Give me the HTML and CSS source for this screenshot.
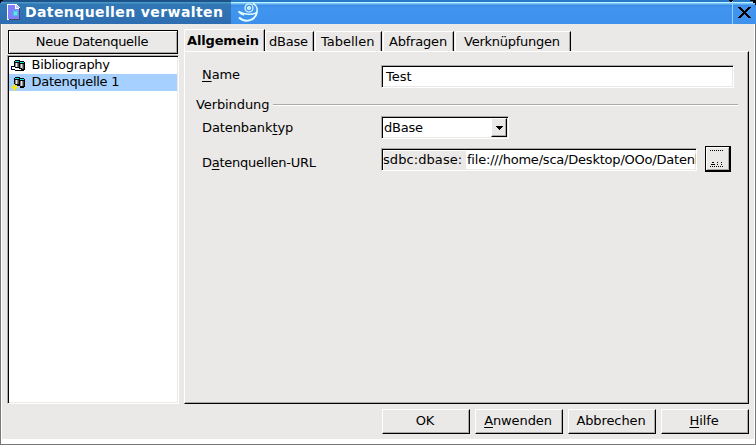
FILE: index.html
```html
<!DOCTYPE html>
<html lang="de">
<head>
<meta charset="utf-8">
<title>Datenquellen verwalten</title>
<link rel="stylesheet" href="styles.css">
</head>
<body>
<div class="window">
  <header class="titlebar">
    <div class="caption">
      <svg class="doc-icon" width="13" height="16" viewBox="0 0 13 16" shape-rendering="crispEdges">
        <path d="M0 0h9l4 4v12H0z" fill="#fff"/>
        <path d="M1 1h7v4h4v10H1z" fill="#8080fa"/>
        <path d="M9 1v3h3z" fill="#c8c8ff"/>
        <path d="M12 4h1v12H2v-1h10z" fill="#444b66"/>
        <path d="M6 6h5v6H6z" fill="#55b5f5"/>
        <path d="M7 8h3v3H7z" fill="#55eed5"/>
      </svg>
      <span class="caption-text">Datenquellen verwalten</span>
    </div>
    <svg class="swirl" width="24" height="21" viewBox="0 0 24 21" fill="none" stroke="#e2ffff">
      <circle cx="12" cy="6" r="4" stroke-width="1.200"/>
      <circle cx="12" cy="6" r="1.300" stroke-width="1.500"/>
      <path d="M16 1.500C20 3.500 21 7.500 19.500 10.500C16 13 8 13 1.500 9.500C2.500 11 4.500 12.500 7 13" stroke-width="1.5"/>
      <path d="M2 15.500C7 20.500 18 20 20 10" stroke-width="2"/>
    </svg>
    <div class="close">
      <svg width="13" height="11" viewBox="0 0 13 11" shape-rendering="crispEdges"><path d="M0 0h3v1h1v1h1v1h1v1h1V3h1V2h1V1h1V0h3v1h-1v1h-1v1h-1v1H9v1H8v1h1v1h1v1h1v1h1v1h1v1h-3v-1H9V9H8V8H7V7H6v1H5v1H4v1H3v1H0v-1h1V9h1V8h1V7h1V6h1V5H4V4H3V3H2V2H1V1H0z"/></svg>
    </div>
    <i class="corner corner-left"></i><i class="notch"></i><i class="corner corner-right"></i>
  </header>
  <main class="content">
    <aside class="sidebar">
      <button class="new-source"><span>Neue Datenquelle</span></button>
      <ul class="sources">
        <li>
          <svg width="16" height="16" viewBox="0 0 16 16" shape-rendering="crispEdges">
            <path d="M4 1h5v1h4v1h1v8h-1v1H5v-1H3V2h1z" fill="#000"/>
            <path d="M4 2h4v1H4zM9 3h4v1H9z" fill="#00e5e5"/>
            <path d="M4 4h4v4H4zM9 5h4v5H9z" fill="#8c8c8c"/>
            <path d="M5 4h1v4H5zM10 5h1v5h-1z" fill="#e8e8e8"/>
            <path d="M7 4h1v4H7zM12 5h1v5h-1z" fill="#444"/>
            <path d="M1 7h3v1h4v1h3v3H4v-1H1z" fill="#000"/>
            <path d="M1 8h3v1h4v1h2v1H4v-1H1z" fill="#fff"/>
            <path d="M0 7h1v4H0z" fill="#0000a8"/>
          </svg>
          <span>Bibliography</span>
        </li>
        <li class="selected">
          <svg width="16" height="16" viewBox="0 0 16 16" shape-rendering="crispEdges">
            <path d="M4 1h5v1h4v1h1v8h-1v1H9v-2H5V9H3V2h1z" fill="#000"/>
            <path d="M4 2h4v1H4zM9 3h4v1H9z" fill="#00e5e5"/>
            <path d="M4 4h4v4H4zM9 5h4v5H9z" fill="#8c8c8c"/>
            <path d="M5 4h1v4H5zM10 5h1v5h-1z" fill="#e8e8e8"/>
            <path d="M7 4h1v4H7zM12 5h1v5h-1z" fill="#444"/>
            <path d="M3 8h1v2h1V9h1v1H5v1h2v1H5v1h1v1H5v-1H4v2H3v-2H2v1H1v-1h1v-1H0v-1h2v-1H1V9h1v1h1z" fill="#ffe800"/>
          </svg>
          <span>Datenquelle 1</span>
        </li>
      </ul>
    </aside>
    <section class="main">
      <nav class="tabs">
        <div class="tab active"><span>Allgemein</span></div>
        <div class="tab t-dbase"><span>dBase</span></div>
        <div class="tab t-tables"><span>Tabellen</span></div>
        <div class="tab t-queries"><span>Abfragen</span></div>
        <div class="tab t-links"><span>Verknüpfungen</span></div>
      </nav>
      <div class="panel">
        <div class="row row-name">
          <label><u>N</u>ame</label>
          <div class="field name-field"><span>Test</span></div>
        </div>
        <div class="group"><span>Verbindung</span><i></i></div>
        <div class="row row-type">
          <label>Datenbank<u>t</u>yp</label>
          <div class="field select"><span>dBase</span>
            <div class="arrow"><svg width="8" height="4" viewBox="0 0 8 4" shape-rendering="crispEdges"><path d="M0 0h7v1H6v1H5v1H4v1H3V3H2V2H1V1H0z"/></svg></div>
          </div>
        </div>
        <div class="row row-url">
          <label class="long">D<u>a</u>tenquellen-URL</label>
          <div class="field url"><span class="prefix">sdbc:dbase:</span><span class="path">file:///home/sca/Desktop/OOo/Datenb</span></div>
          <button class="browse">
            <svg width="14" height="18" viewBox="0 0 14 18" shape-rendering="crispEdges" stroke="#000" stroke-width="1"><path d="M0 .5h14M0 16.500h14" stroke-dasharray="1 1"/><path d="M1 14.500h4M2 12.500h2M7 12.500h1M11 12.500h1M7 14.500h1M11 14.500h1"/></svg>
          </button>
        </div>
      </div>
      <footer class="buttons">
        <button><span>OK</span></button>
        <button><span><u>A</u>nwenden</span></button>
        <button><span>Abbrechen</span></button>
        <button><span><u>H</u>ilfe</span></button>
      </footer>
    </section>
  </main>
</div>
</body>
</html>
```
FILE: styles.css
```css
* { box-sizing: border-box; }
body {
  margin: 0;
  overflow: hidden;
  background: #eae9e7;
  color: #000;
  font: 13px/16px "DejaVu Sans", sans-serif;
  letter-spacing: -0.1px;
}
svg { display: block; flex: none; }
span, label { white-space: nowrap; }
u { text-underline-offset: 2px; text-decoration-thickness: 1px; text-decoration-skip-ink: none; }
button { padding: 0; font: inherit; letter-spacing: inherit; color: inherit; background: #eae9e7; border-radius: 0; }

.window { width: 756px; height: 445px; display: flex; flex-direction: column; }

.titlebar {
  position: relative;
  height: 24px;
  flex: none;
  display: flex;
  background: linear-gradient(#2878c8 0 2px, #b5f1ff 2px 3px, #7ac4fa 3px 4px, #3b8ae5 5px, #4295ef 8px, #3d91ec 24px);
}
.caption {
  width: 231px;
  display: flex;
  padding-left: 7px;
  background: linear-gradient(#1c5388 0 2px, #4995c5 2px 3px, #3278b5 4px, #2d6db1 24px);
}
.doc-icon { margin-top: 4px; }
.caption-text { margin: 4px 0 0 5px; color: #fff; font-size: 14px; font-weight: bold; letter-spacing: 0.4px; }
.swirl { margin: 2px 0 0 6px; }
.close { width: 24px; margin-left: auto; padding: 7px 0 0 5px; border-left: 1px solid #8bd5ff; }
.corner, .notch { position: absolute; top: 0; background: #000; }
.corner { width: 6px; height: 5px; }
.corner-left { left: 0; clip-path: polygon(0 0, 3px 0, 3px 1px, 1px 1px, 1px 3px, 0 3px); }
.corner-right { right: 0; clip-path: polygon(0 0, 100% 0, 100% 100%, 5px 100%, 5px 3px, 3px 3px, 3px 1px, 0 1px); }
.notch { left: 729px; width: 4px; height: 2px; clip-path: polygon(0 0, 100% 0, 100% 1px, 3px 1px, 3px 2px, 1px 2px, 1px 1px, 0 1px); }

.content {
  height: 421px;
  display: flex;
  gap: 5px;
  padding: 5px 5px 0 6px;
  border: solid #777;
  border-width: 0 1px 1px;
  box-shadow: inset 1px 0 #fff, inset -1px 0 #fff, inset 0 -5px #fff;
}
.sidebar { width: 171px; margin-left: 1px; display: flex; flex-direction: column; letter-spacing: -0.3px; }
.new-source {
  width: 170px;
  height: 24px;
  border: 1px solid #000;
  margin-top: 1px;
  padding-right: 2px;
  box-shadow: inset 1px 1px #fff, inset -1px -1px #aaa;
}

.field, .sources {
  border: solid;
  border-width: 1px;
  border-color: #aaa #fff #fff #aaa;
  background: #fff;
  box-shadow: inset 1px 1px #000, inset -1px -1px #eae9e7;
}
.sources { list-style: none; width: 172px; height: 349px; margin: 1px 0 0 -1px; padding: 1px; }
.sources li { display: flex; height: 17px; padding-left: 2px; }
.sources li svg { margin-top: 2px; }
.sources li span { margin-left: 4.600px; }
.selected { background: #a6d0ff; }

.main { width: 565px; flex: none; display: flex; flex-direction: column; }
.tabs { height: 22px; display: flex; align-items: flex-end; letter-spacing: -0.2px; }
.tab {
  height: 20px;
  border: solid;
  border-width: 1px 1px 0 0;
  border-color: #fff #000 #fff;
  border-top-left-radius: 2px;
  box-shadow: inset 1px 0 #fff, inset -1px 0 #aaa;
  padding-top: 2px;
  margin-right: 1px;
}
.tab.active { width: 81px; height: 22px; padding: 3px 0 0 3px; margin-right: 0; font-weight: bold; letter-spacing: -0.15px; }
.t-dbase { width: 49px; padding-left: 4px; }
.t-tables { width: 67px; padding-left: 6px; letter-spacing: 0; }
.t-queries { width: 71px; padding-left: 6px; }
.t-links { width: 116px; padding-left: 9px; letter-spacing: -0.25px; }
.panel {
  height: 353px;
  padding: 14px 10px 0 11px;
  border: solid;
  border-width: 1px;
  border-color: #fff #000 #000 #fff;
  box-shadow: inset -1px -1px #aaa;
}
.row { display: flex; padding-left: 6px; }
.row label { width: 179px; flex: none; }
.row label.long { letter-spacing: -0.25px; }
.field { height: 23px; display: flex; padding: 3px 2px 2px 4px; overflow: hidden; }
.name-field { width: 353px; letter-spacing: 0; }
.row-name { height: 32px; margin-top: -1px; }
.row-name label { padding-top: 2px; }
.group { height: 16px; display: flex; align-items: center; }
.group i { flex: 1; height: 2px; margin: 0 0 0 4px; border-top: 1px solid #aaa; border-bottom: 1px solid #fff; }
.row-type { height: 30px; margin-top: 3px; }
.row-type label { padding-top: 4px; }
.select { width: 128px; padding: 3px 1px 1px 2px; letter-spacing: -0.2px; }
.arrow {
  width: 16px;
  height: 19px;
  margin: -2px 0 0 auto;
  padding: 7px 0 0 4px;
  background: #eae9e7;
  border: solid;
  border-width: 1px;
  border-color: #fff #000 #000 #fff;
  box-shadow: inset -1px -1px #aaa;
}
.row-url { height: 26px; }
.row-url label { padding-top: 9px; }
.url { width: 316px; margin-top: 2px; padding: 2px 2px 1px 1px; }
.prefix { width: 82px; margin-left: 1px; padding-top: 1px; background: #eae9e7; flex: none; letter-spacing: 0.08px; text-indent: -1px; }
.path { padding: 1px 0 0 1px; letter-spacing: -0.21px; }
.browse {
  width: 26px;
  height: 26px;
  margin-left: 8px;
  padding: 1px 0 0 4px;
  border: solid #000;
  border-width: 1px 2px 2px 1px;
  box-shadow: inset 1px 1px #fff, inset -1px -1px #aaa;
}

.buttons { display: flex; justify-content: flex-end; gap: 5px; margin-top: 5px; }
.buttons button {
  width: 88px;
  height: 25px;
  border: 1px solid;
  border-color: #fff #000 #000 #fff;
  box-shadow: inset -1px -1px #aaa;
  padding: 0 2px 2px 0;
}
```
